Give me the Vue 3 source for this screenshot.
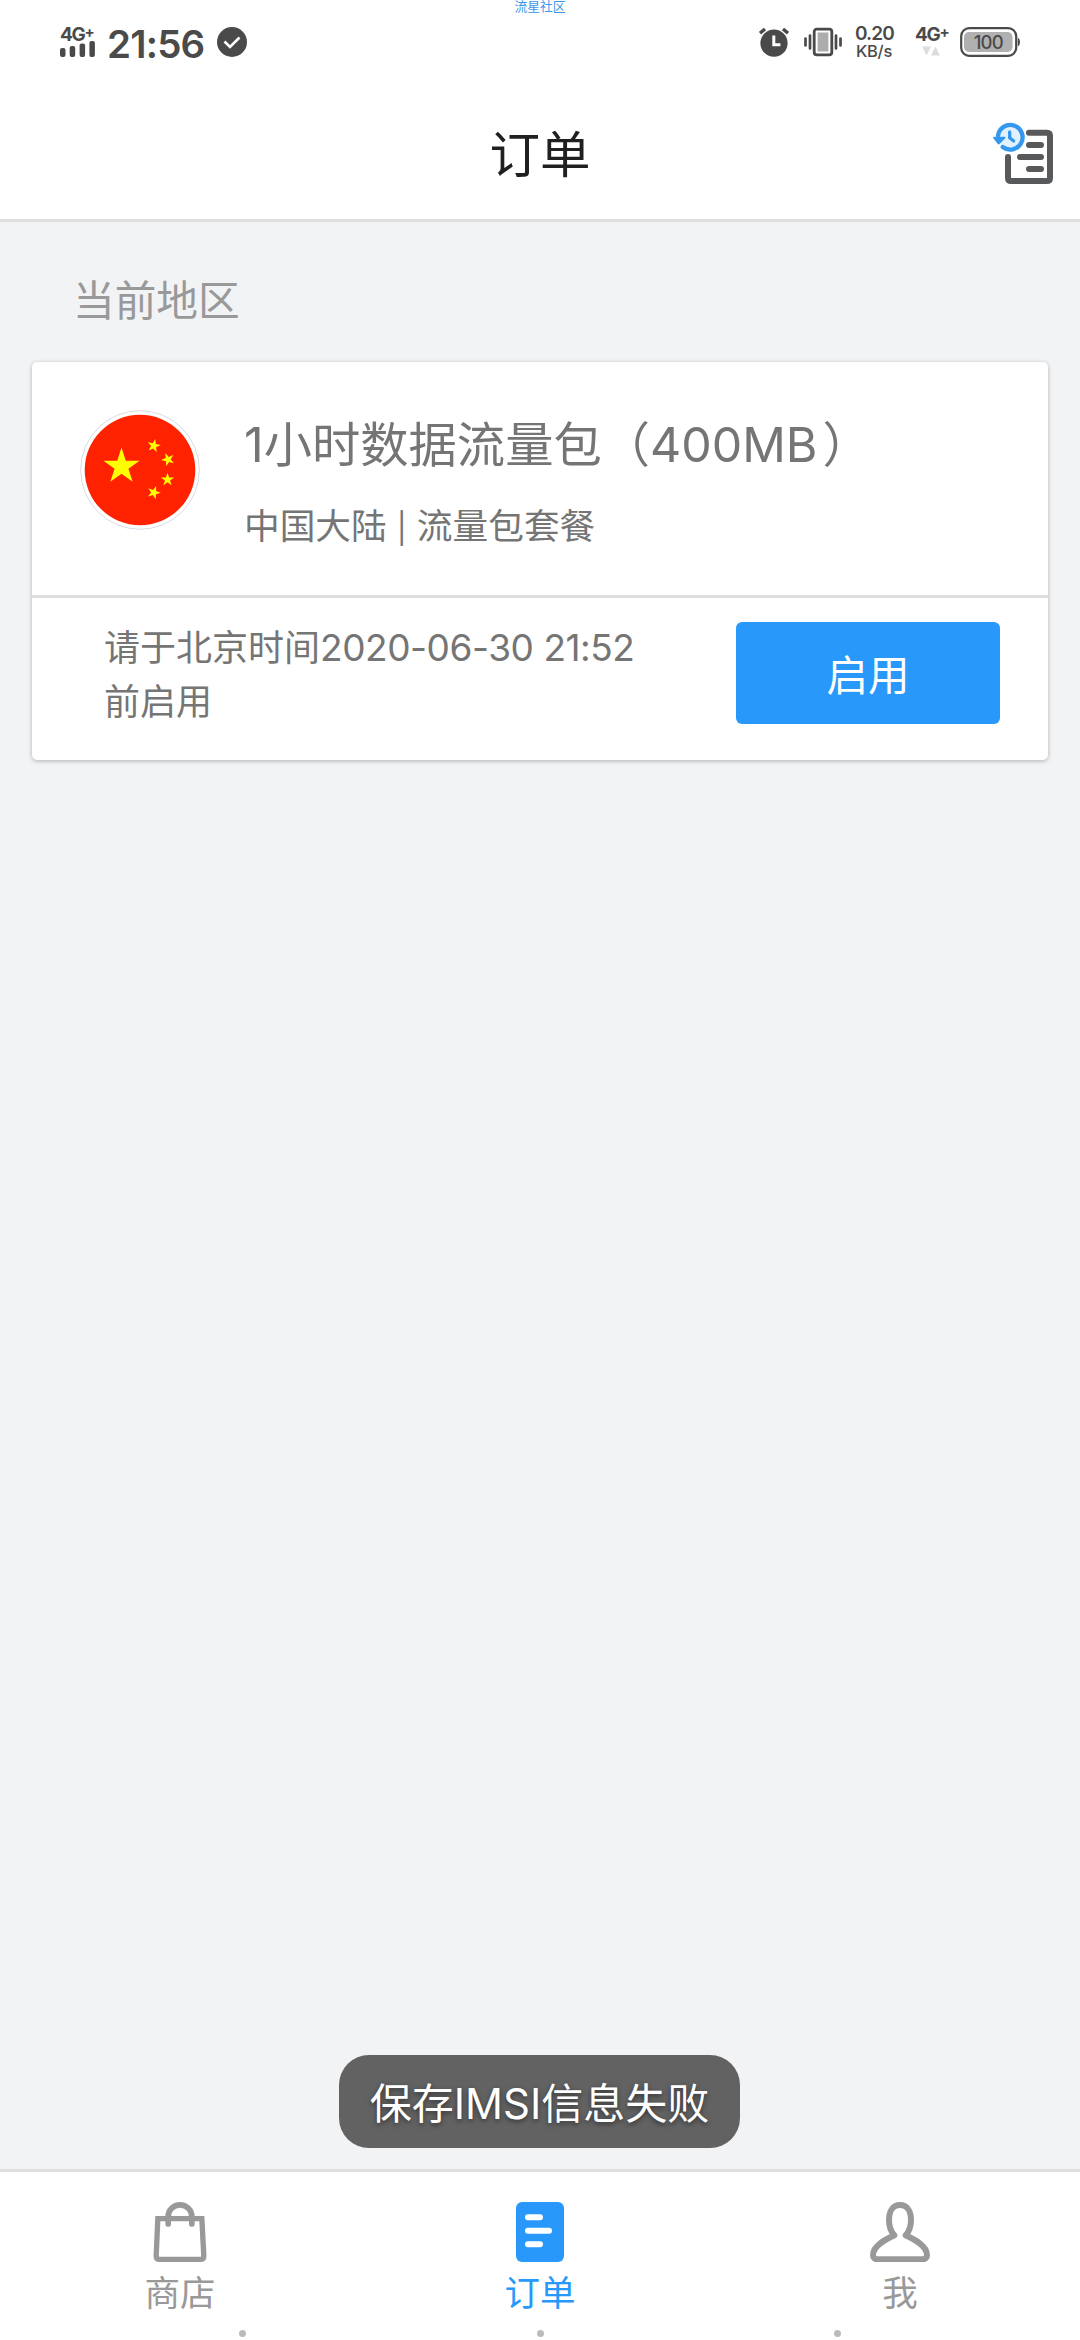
<template>
  <div class="page">
    <div class="watermark">流星社区</div>

    <div class="status-bar">
      <div class="signal">
        <span class="net">4G<sup>+</sup></span>
        <svg width="35" height="16" viewBox="0 0 35 16">
          <rect x="0" y="7" width="5.5" height="9" rx="2" />
          <rect x="9.7" y="5" width="5.5" height="11" rx="2" />
          <rect x="19.6" y="2.5" width="5.5" height="13.5" rx="2" />
          <rect x="29.4" y="0" width="5.5" height="16" rx="2" />
        </svg>
      </div>
      <span class="time">21:56</span>
      <svg class="check" width="30" height="30" viewBox="0 0 30 30">
        <circle cx="15" cy="15" r="15" />
        <path d="M7.5 14.5l5.5 5.5 9.5-9.5" fill="none" stroke="#fff" stroke-width="2.6" />
      </svg>

      <div class="status-right">
        <svg width="30" height="30" viewBox="0 0 30 30">
          <circle cx="15" cy="16.2" r="13.6" />
          <path d="M1 6.2L6 2M24 2l5 4.2" stroke="#4a4a4a" stroke-width="3.4" />
          <path d="M14.8 8.5v9.3h6.6" fill="none" stroke="#fff" stroke-width="3" />
        </svg>
        <svg class="vibrate" width="38" height="30" viewBox="0 0 38 30">
          <rect x="10.2" y="2.2" width="17.6" height="25.6" rx="2.5" fill="#fff" stroke="#4a4a4a" stroke-width="2.8" />
          <rect x="13.6" y="5.5" width="10.8" height="19" fill="#acacac" />
          <path d="M1.5 11.5v7M6 8.5v13M32 8.5v13M36.5 11.5v7" stroke="#4a4a4a" stroke-width="2.7" stroke-linecap="round" />
        </svg>
        <div class="speed">
          <span class="speed-num">0.20</span>
          <span class="speed-unit">KB/s</span>
        </div>
        <div class="data">
          <span class="net">4G<sup>+</sup></span>
          <svg width="18" height="10" viewBox="0 0 18 10" class="arrows">
            <path d="M0 .5h9L4.5 9.5zM9 9.5h9L13.5 .5z" />
          </svg>
        </div>
        <svg class="battery" width="60" height="30" viewBox="0 0 60 30">
          <rect x="1.2" y="1.2" width="55" height="27.6" rx="8" fill="#fff" stroke="#4a4a4a" stroke-width="2.2" />
          <rect x="4" y="5" width="48.5" height="20" rx="5" fill="#b0b0b0" />
          <path d="M57.8 10.5q2.2 1 2.2 4.5t-2.2 4.5z" />
          <text x="28.7" y="21.7" text-anchor="middle" textLength="30">100</text>
        </svg>
      </div>
    </div>

    <header class="header">
      <h1>订单</h1>
      <svg class="history" width="62" height="64" viewBox="66 60 186 192" fill="none" stroke-linecap="round" stroke-linejoin="round">
        <path d="M177 95H231Q240 95 240 104V231Q240 240 231 240H123Q114 240 114 231V168" stroke="#58595b" stroke-width="18" />
        <path d="M177 132H213M150 168H213M177 204H213" stroke="#58595b" stroke-width="18" />
        <circle cx="120" cy="109" r="34" fill="#e3f1fe" />
        <path d="M84 104A37 37 0 1 1 98 138" stroke="#3398ee" stroke-width="13" />
        <path d="M72 110H104L86 128z" fill="#3398ee" stroke="#3398ee" stroke-width="5" />
        <path d="M119 93V110L131 120" stroke="#3398ee" stroke-width="10" />
      </svg>
    </header>

    <main class="content">
      <h2 class="region">当前地区</h2>
      <div class="card">
        <div class="card-top">
          <svg class="flag" width="120" height="120" viewBox="0 0 120 120">
            <circle cx="60" cy="60" r="59.3" fill="#fff" stroke="#d9dbe3" stroke-width="1" />
            <circle cx="60" cy="60" r="55.3" fill="#ff2200" />
            <polygon v-for="(s, i) in stars" :key="i" :points="starPoints(s)" fill="#ffff00" />
          </svg>
          <div class="info">
            <div class="name">1小时数据流量包（<span class="amount">400MB</span>）</div>
            <div class="desc">中国大陆 <span class="bar">|</span> 流量包套餐</div>
          </div>
        </div>
        <div class="card-bottom">
          <p class="notice">请于北京时间<span class="date">2020-06-30 21:52</span><br />前启用</p>
          <button class="enable">启用</button>
        </div>
      </div>
      <div class="toast">保存IMSI信息失败</div>
    </main>

    <nav class="tabs">
      <div class="tab" v-for="tab in tabs" :key="tab.id" :class="{ active: tab.id === current }" @click="current = tab.id">
        <svg v-if="tab.id === 'shop'" width="54" height="60" viewBox="159 155 161 180" fill="none" stroke="currentColor">
          <path d="M173 205H305L311 317Q311 327 301 327H178Q168 327 168 317Z" stroke-width="16" />
          <path d="M204 221V199A35.5 35.5 0 0 1 275 199V221" stroke-width="17" stroke-linecap="round" />
        </svg>
        <svg v-else-if="tab.id === 'order'" width="48" height="60" viewBox="0 0 48 60">
          <rect width="48" height="60" rx="6" fill="currentColor" />
          <path d="M12 15.3h12M12 28.7h21M12 42.3h12" stroke="#fff" stroke-width="6" stroke-linecap="round" />
        </svg>
        <svg v-else width="60" height="60" viewBox="210 155 180 180" fill="none" stroke="currentColor" stroke-width="18" stroke-linejoin="round">
          <path d="M300 164C277 164 267 185 267 210C267 230 275 246 283 255C260 266 219 285 219 314C219 322 224 327 232 327H368C376 327 381 322 381 314C381 285 340 266 317 255C325 246 333 230 333 210C333 185 323 164 300 164Z" />
        </svg>
        <span>{{ tab.label }}</span>
      </div>
    </nav>
    <div class="nav-dots"><i></i><i></i><i></i></div>
  </div>
</template>

<script setup>
import { ref } from 'vue'

const current = ref('order')

const tabs = [
  { id: 'shop', label: '商店' },
  { id: 'order', label: '订单' },
  { id: 'me', label: '我' }
]

const stars = [
  { x: 41.5, y: 56.5, r: 19, rot: 0 },
  { x: 73.8, y: 35.8, r: 7, rot: 12 },
  { x: 88, y: 49.5, r: 7, rot: -22 },
  { x: 87.5, y: 69.7, r: 7, rot: 0 },
  { x: 73.8, y: 82.6, r: 7, rot: 20 }
]

// Five-pointed star, alternating outer and inner radius
const starPoints = ({ x, y, r, rot }) => {
  const points = []
  for (let i = 0; i < 10; i++) {
    const radius = i % 2 ? r * 0.382 : r
    const a = ((i * 36 - 90 + rot) * Math.PI) / 180
    points.push(`${(x + radius * Math.cos(a)).toFixed(2)},${(y + radius * Math.sin(a)).toFixed(2)}`)
  }
  return points.join(' ')
}
</script>

<style>
body {
  margin: 0;
}
</style>

<style scoped>
.page {
  position: relative;
  display: flex;
  flex-direction: column;
  width: 1080px;
  height: 2340px;
  overflow: hidden;
  background: #f2f3f5;
  font-family: Inter, "Noto Sans CJK SC", sans-serif;
}
svg {
  display: block;
  flex: none;
}
.watermark {
  position: absolute;
  top: 0;
  left: 0;
  width: 100%;
  font-size: 12.8px;
  line-height: 14px;
  text-align: center;
  color: #3d97e8;
}
.status-bar {
  display: flex;
  align-items: center;
  box-sizing: border-box;
  height: 84px;
  padding: 0 60px;
  background: #fff;
  color: #4a4a4a;
  fill: #4a4a4a;
}
.signal {
  width: 35px;
  height: 30px;
}
.net {
  display: block;
  height: 14px;
  font-size: 19px;
  line-height: 15px;
  font-weight: 700;
  letter-spacing: -1.3px;
  white-space: nowrap;
}
.net sup {
  font-size: 15px;
  line-height: 0;
  vertical-align: 4px;
}
.time {
  width: 96px;
  margin-left: 12px;
  padding-top: 3px;
  font-size: 38.5px;
  line-height: 50px;
  font-weight: 600;
  letter-spacing: -0.8px;
}
.check {
  margin-left: 14px;
}
.status-right {
  display: flex;
  align-items: center;
  margin-left: auto;
}
.vibrate {
  margin-left: 15px;
}
.speed {
  display: flex;
  flex-direction: column;
  width: 38px;
  margin-left: 13px;
  padding-top: 2px;
  white-space: nowrap;
}
.speed-num {
  font-size: 19px;
  line-height: 16px;
  font-weight: 600;
  letter-spacing: -0.9px;
}
.speed-unit {
  padding-left: 1px;
  font-size: 16.5px;
  line-height: 18px;
  font-weight: 500;
  letter-spacing: -0.3px;
}
.data {
  width: 31px;
  height: 30px;
  margin-left: 22px;
}
.arrows {
  margin: 5px 0 0 7px;
  fill: #dcdcdc;
}
.battery {
  margin-left: 14px;
}
.battery text {
  font-size: 18.5px;
  font-weight: 500;
}
.header {
  display: grid;
  grid-template-columns: 1fr auto 1fr;
  align-items: center;
  box-sizing: border-box;
  height: 138px;
  padding: 0 26px 0 0;
  border-bottom: 3px solid #dedede;
  background: #fff;
}
.header h1 {
  grid-column: 2;
  margin: 7px -26px 0 0;
  font-size: 50.5px;
  line-height: 60px;
  font-weight: 400;
  color: #202020;
}
.history {
  justify-self: end;
  margin-top: 2px;
}
.content {
  flex: 1;
  position: relative;
}
.region {
  margin: 0;
  padding: 49px 0 31px 73px;
  font-size: 41.7px;
  line-height: 60px;
  font-weight: 400;
  color: #999;
}
.card {
  margin: 0 32px;
  height: 398px;
  border-radius: 5px;
  background: #fff;
  box-shadow: 0 1px 4px rgba(0, 0, 0, 0.28);
}
.card-top {
  display: flex;
  box-sizing: border-box;
  height: 236px;
  padding: 48px 0 0 48px;
  border-bottom: 3px solid #dedede;
  color: #757575;
}
.info {
  margin-left: 44px;
}
.name {
  margin-top: 3px;
  font-size: 48.3px;
  line-height: 64px;
}
.amount {
  margin-right: 5px;
}
.desc {
  margin-top: 24px;
  font-size: 35.7px;
  line-height: 50px;
}
.bar {
  font-size: 30px;
}
.card-bottom {
  display: flex;
  justify-content: space-between;
  padding: 24px 48px 0 72px;
}
.notice {
  margin: -1px 0 0;
  font-size: 36px;
  line-height: 54px;
  color: #757575;
  white-space: nowrap;
}
.date {
  font-size: 37px;
  line-height: 1;
  letter-spacing: -0.45px;
}
.enable {
  width: 264px;
  height: 102px;
  padding: 0;
  border: none;
  border-radius: 6px;
  background: #2899fb;
  color: #fff;
  font-family: inherit;
  font-size: 41.5px;
}
.toast {
  position: absolute;
  left: 339px;
  bottom: 21px;
  width: 401px;
  height: 93px;
  border-radius: 30px;
  background: #626262;
  color: #fff;
  font-size: 42px;
  line-height: 98px;
  text-align: center;
  white-space: nowrap;
  text-shadow: 0 2px 5px rgba(0, 0, 0, 0.5);
}
.tabs {
  display: flex;
  box-sizing: border-box;
  height: 171px;
  border-top: 3px solid #dedede;
  background: #fff;
}
.tab {
  flex: 1;
  display: flex;
  flex-direction: column;
  align-items: center;
  padding-top: 30px;
  color: #999;
}
.tab.active {
  color: #2899fb;
}
.tab span {
  margin-top: 8px;
  font-size: 35.5px;
  line-height: 48px;
}
/* System navigation hints over the tab bar */
.nav-dots {
  position: absolute;
  left: 239px;
  bottom: 3px;
  display: flex;
  justify-content: space-between;
  width: 602px;
}
.nav-dots i {
  width: 7px;
  height: 7px;
  border-radius: 50%;
  background: #bbb;
}
</style>
